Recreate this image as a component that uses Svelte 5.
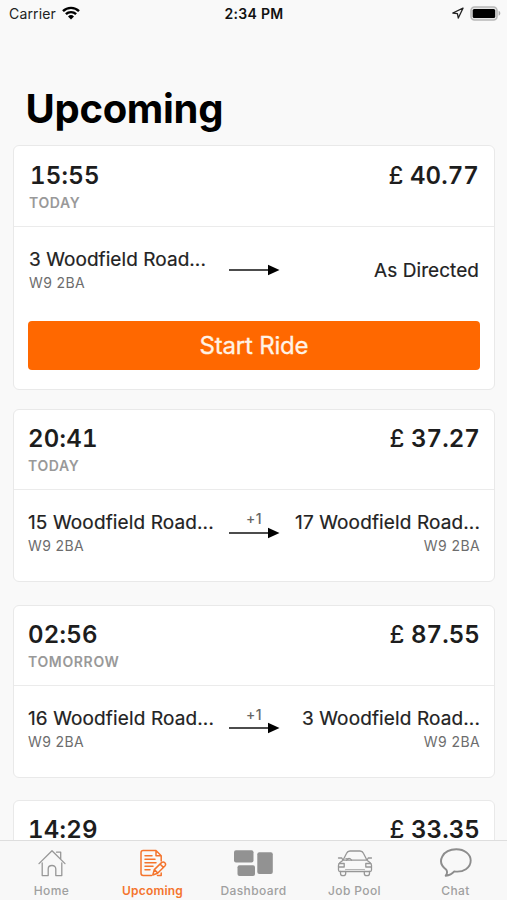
<script>
  const rides = [
    { time: '15:55', day: 'TODAY', price: '40.77', from: '3 Woodfield Road...', fromCode: 'W9 2BA', to: 'As Directed', active: true },
    { time: '20:41', day: 'TODAY', price: '37.27', from: '15 Woodfield Road...', fromCode: 'W9 2BA', to: '17 Woodfield Road...', toCode: 'W9 2BA', stops: '+1' },
    { time: '02:56', day: 'TOMORROW', price: '87.55', from: '16 Woodfield Road...', fromCode: 'W9 2BA', to: '3 Woodfield Road...', toCode: 'W9 2BA', stops: '+1' },
    { time: '14:29', price: '33.35' }
  ];
  const tabs = ['Home', 'Upcoming', 'Dashboard', 'Job Pool', 'Chat'];
</script>

<div class="screen">
  <header class="status">
    <div class="carrier">
      <span>Carrier</span>
      <svg width="18" height="14" viewBox="0 0 18 14" fill="none" stroke="#000" stroke-width="2.4">
        <path d="M1 5.2a11.3 11.3 0 0 1 16 0M3.9 8.2a7.2 7.2 0 0 1 10.2 0" />
        <path d="M6 10.5a4.3 4.3 0 0 1 6 0L9 13.6z" fill="#000" stroke="none" />
      </svg>
    </div>
    <div class="clock">2:34 PM</div>
    <div class="indicators">
      <svg width="12" height="12" viewBox="0 0 12 12" fill="none" stroke="#222" stroke-width="1.3" stroke-linejoin="round">
        <path d="M11 1.2.8 6l4.6.7.9 4.3z" />
      </svg>
      <svg width="31" height="15" viewBox="0 0 31 15">
        <rect x="1" y="1" width="26" height="13" rx="3.5" fill="#e6e6e6" stroke="#b8b8b8" stroke-width="1.6" />
        <rect x="2.7" y="3" width="22.5" height="9" rx="1.5" />
        <path d="M28.6 4.8c2.3.8 2.3 4.2 0 5z" fill="#aaa" />
      </svg>
    </div>
  </header>

  <h1>Upcoming</h1>

  <main>
    {#each rides as ride}
      <article class:active={ride.active}>
        <div class="summary">
          <div>
            <div class="time">{ride.time}</div>
            {#if ride.day}<div class="day">{ride.day}</div>{/if}
          </div>
          <div class="price"><span>£</span> {ride.price}</div>
        </div>
        {#if ride.from}
          <div class="route">
            <div class="place">
              <div class="address">{ride.from}</div>
              <div class="code">{ride.fromCode}</div>
            </div>
            <div class="arrow">
              <span>{ride.stops ?? ''}</span>
              <svg width="51" height="12" viewBox="0 0 51 12">
                <path d="M0 6h41" stroke="#111" stroke-width="1.5" />
                <path d="M39 .8 50.5 6 39 11.2z" fill="#000" />
              </svg>
            </div>
            <div class="place end" class:single={!ride.toCode}>
              <div class="address">{ride.to}</div>
              {#if ride.toCode}<div class="code">{ride.toCode}</div>{/if}
            </div>
          </div>
        {/if}
        {#if ride.active}<button>Start Ride</button>{/if}
      </article>
    {/each}
  </main>

  <nav>
    {#each tabs as tab}
      <div class="tab" class:selected={tab === 'Upcoming'}>
        {#if tab === 'Home'}
          <svg width="28" height="28" viewBox="0 0 28 28" class="line">
            <path d="M1 14.6 14 1.7l13 12.9M18.5 3.2h4.2V10M4.2 14v12.6h6V20c0-4.7 7.6-4.7 7.6 0v6.6h6V14" />
          </svg>
        {:else if tab === 'Upcoming'}
          <svg width="28" height="28" viewBox="0 0 28 28" class="line doc">
            <path d="M22.2 12V6.7L17 1.5H4.2Q2 1.5 2 3.7v20.6q0 2.2 2.2 2.2h8.3M17 1.5v5.2h5.2M6 6.7h7M6 10.2h10M6 13.7h11M6 17.2h8M6 20.7h5M18.5 26.5h3.7V24" />
            <path d="m15.3 20.6 7.500-7.200q1.600-1.100 3 .3t.3 3l-7.500 7.500-4.800 1.800zM21 15l3.400 3.400M15.300 20.600l3.300 3.300" />
          </svg>
        {:else if tab === 'Dashboard'}
          <svg width="40" height="28" viewBox="0 0 40 28" fill="#929292">
            <rect x="0" y="1.3" width="19.5" height="12.2" rx="2" />
            <rect x="3.5" y="16.3" width="17.5" height="10.7" rx="2" />
            <rect x="23.3" y="3.3" width="15.5" height="21.7" rx="2" />
          </svg>
        {:else if tab === 'Job Pool'}
          <svg width="36" height="28" viewBox="0 0 36 28" class="line">
            <path d="M6 11.2 9.6 4.3Q10.5 2 13 2h10q2.500 0 3.400 2.300L30 11.200zM1.500 9h3.300L6 11.200l-3.200 2.500q-1.300 1-1.300 2.800V21q0 1.500 1.500 1.500h30q1.500 0 1.500-1.500v-4.500q0-1.800-1.300-2.800L30 11.200 31.200 9h3.300" />
            <path d="M2.300 14.500h4.900v3.500H1.500M33.700 14.500h-4.900v3.500h5.700M3.500 22.500v2q0 2.200 2.600 2.200t2.600-2.200v-2M27.300 22.500v2q0 2.200 2.600 2.200t2.600-2.200v-2M9.500 11.200q2.500-3.500 5 0M9 9.500l2 1" />
            <path d="M8.500 20.500h19" stroke-width=".7" />
          </svg>
        {:else}
          <svg width="34" height="32" viewBox="0 0 34 32" class="line chat">
            <path d="M7.300 22.800C-3.600 14.500 4.200 2.300 17.300 2.300c8 0 14.400 4.800 14.400 11.300 0 7.300-7.300 12-16.400 10.800-2.100 2.500-5.100 4-8.600 4.300 1.400-1.800 1.800-4 .6-5.900z" />
          </svg>
        {/if}
        <span>{tab}</span>
      </div>
    {/each}
  </nav>
</div>

<style>
  :global(body) { background: #f9f9f9; }
  .screen {
    width: 507px;
    height: 900px;
    display: flex;
    flex-direction: column;
    overflow: hidden;
    background: #f9f9f9;
    color: #1d1d1d;
    font-family: Inter, Roboto, sans-serif;
    box-sizing: border-box;
  }
  .status {
    height: 28px;
    flex: none;
    display: grid;
    grid-template-columns: 1fr auto 1fr;
    align-items: center;
    padding: 0 6px 0 9px;
    font-size: 14px;
    line-height: 28px;
  }
  .carrier { display: flex; align-items: center; gap: 6px; color: #222; letter-spacing: .15px; }
  .carrier svg { margin-bottom: 3px; }
  .clock { margin-right: 2px; font-weight: 600; color: #111; letter-spacing: .3px; }
  .indicators { display: flex; justify-content: flex-end; align-items: center; gap: 6px; padding-bottom: 2px; }
  h1 {
    flex: none;
    height: 117px;
    margin: 0;
    padding: 56px 0 0 25.5px;
    box-sizing: border-box;
    font-size: 40px;
    line-height: 50px;
    font-weight: 700;
    letter-spacing: -.3px;
    color: #000;
  }
  main { flex: 1; min-height: 0; overflow: hidden; padding: 0 12px 0 13px; }
  article {
    height: 173px;
    box-sizing: border-box;
    margin-bottom: 22.5px;
    border: 1.5px solid #e9e9e9;
    border-radius: 6px;
    background: #fff;
  }
  article.active { height: 245px; margin-bottom: 19px; }
  .summary {
    height: 80px;
    box-sizing: border-box;
    border-bottom: 1.5px solid #ebebeb;
    display: flex;
    justify-content: space-between;
    padding: 13px 14px 0;
  }
  .time, .price { font-size: 24px; line-height: 32px; font-weight: 600; font-variant-numeric: tabular-nums; }
  .time { letter-spacing: .25px; }
  .price { letter-spacing: .1px; }
  .price span { font-weight: 500; }
  .day { font-size: 14px; line-height: 22px; font-weight: 600; color: #999; letter-spacing: .65px; }
  .route { display: flex; padding: 19px 14px 0; height: 74px; box-sizing: border-box; }
  .place { width: 201px; }
  .address { font-size: 19px; line-height: 27px; white-space: nowrap; color: #222; letter-spacing: .12px; -webkit-text-stroke: .2px #222; }
  .code { font-size: 14px; line-height: 20px; color: #6d6d6d; letter-spacing: .4px; }
  .end { text-align: right; }
  .single { padding-top: 11px; }
  .arrow { width: 51px; display: flex; flex-direction: column; align-items: center; }
  .arrow span { height: 17.5px; line-height: 20px; font-size: 14px; font-weight: 500; color: #666; letter-spacing: .4px; }
  .active .summary { height: 81px; padding: 14px 15px 0 16px; }
  .active .day { margin-left: -1px; }
  .active .route { padding: 19px 15px 0; }
  .active .place { width: 200px; }
  .active .address { letter-spacing: .06px; }
  button {
    display: block;
    width: 452px;
    height: 49px;
    margin: 20px auto 0;
    padding: 0;
    border: 0;
    border-radius: 4px;
    background: #ff6800;
    color: #fff3e6;
    font: 400 24px/49px Inter, Roboto, sans-serif;
    letter-spacing: -.2px;
    -webkit-text-stroke: .3px #fff3e6;
  }
  nav {
    height: 60px;
    flex: none;
    box-sizing: border-box;
    border-top: 1px solid #dedede;
    display: flex;
    background: #f8f8f8;
    padding: 0 1px;
  }
  .tab {
    flex: 1;
    display: flex;
    flex-direction: column;
    align-items: center;
    color: #a0a0a0;
    font-size: 12px;
    font-weight: 500;
    letter-spacing: .38px;
  }
  .tab svg { margin-top: 8px; flex: none; }
  .tab span { margin-top: 6px; line-height: 16px; }
  .line { fill: none; stroke: #979797; stroke-width: 1.3; stroke-linejoin: round; stroke-linecap: round; }
  .tab .chat { stroke: #8d8d8d; stroke-width: 1.9; margin-top: 6px; margin-bottom: -2px; }
  .tab .doc { stroke: #f4742d; stroke-width: 1.5; }
  .selected { color: #f4742d; font-weight: 600; letter-spacing: .2px; }
</style>
